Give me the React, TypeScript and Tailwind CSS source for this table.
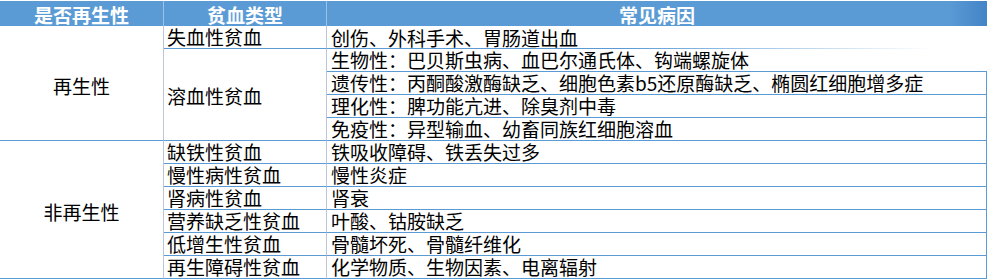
import React from "react";

const BLUE = "border-[#5b9bd5]";

const regenRows: string[] = [
  "创伤、外科手术、胃肠道出血",
  "生物性：巴贝斯虫病、血巴尔通氏体、钩端螺旋体",
  "遗传性：丙酮酸激酶缺乏、细胞色素b5还原酶缺乏、椭圆红细胞增多症",
  "理化性：脾功能亢进、除臭剂中毒",
  "免疫性：异型输血、幼畜同族红细胞溶血",
];

const nonRegen: [string, string][] = [
  ["缺铁性贫血", "铁吸收障碍、铁丢失过多"],
  ["慢性病性贫血", "慢性炎症"],
  ["肾病性贫血", "肾衰"],
  ["营养缺乏性贫血", "叶酸、钴胺缺乏"],
  ["低增生性贫血", "骨髓坏死、骨髓纤维化"],
  ["再生障碍性贫血", "化学物质、生物因素、电离辐射"],
];

function Txt({ children }: { children: React.ReactNode }) {
  return <span className="block h-[22px] leading-[22px] whitespace-nowrap">{children}</span>;
}

export default function App() {
  return (
    <div className="w-[988px] h-[279px] bg-white overflow-hidden pt-[1px] font-['Noto_Sans_CJK_SC',sans-serif] text-[19px] text-black">
      <div className="grid grid-cols-[164px_163px_660px] grid-rows-[25px_repeat(11,23px)]">
        {/* header */}
        <div className="bg-[#5b9bd5] border-r border-white/40 flex items-end justify-center text-white font-bold">
          <Txt>是否再生性</Txt>
        </div>
        <div className="bg-[#5b9bd5] border-r border-white/40 flex items-end justify-center text-white font-bold">
          <Txt>贫血类型</Txt>
        </div>
        <div className="bg-[linear-gradient(to_right,#5b9bd5_94%,#4384c6)] flex items-end justify-center text-white font-bold">
          <Txt>常见病因</Txt>
        </div>

        {/* regenerative block */}
        <div
          className={`row-span-5 border-r border-r-[#bcc6da] border-b ${BLUE} flex items-center justify-center`}
        >
          <span className="block leading-[22px] pt-[6px]">再生性</span>
        </div>
        <div className={`border-r border-r-[#bcc6da] border-b ${BLUE} flex items-end pl-[3px]`}>
          <Txt>失血性贫血</Txt>
        </div>
        <div className="relative flex items-end pl-[4px]">
          <Txt>{regenRows[0]}</Txt>
          <div className="absolute left-0 right-0 bottom-0 h-px bg-[linear-gradient(to_right,#5b9bd5_45%,rgba(91,155,213,0)_92%)]" />
        </div>
        <div
          className={`row-span-4 border-r border-r-[#bcc6da] border-b ${BLUE} flex items-center pl-[3px]`}
        >
          <span className="block leading-[22px] pt-[3px]">溶血性贫血</span>
        </div>
        {regenRows.slice(1).map((t, i) => (
          <div
            key={t}
            className={`border-b ${BLUE} ${i === 0 ? "" : "border-r"} flex items-end pl-[4px]`}
          >
            <Txt>{t}</Txt>
          </div>
        ))}

        {/* non-regenerative block */}
        <div
          className={`row-span-6 border-r border-r-[#bcc6da] border-b ${BLUE} flex items-center justify-center`}
        >
          <span className="block leading-[22px] pt-[4px]">非再生性</span>
        </div>
        {nonRegen.map(([a, b]) => (
          <React.Fragment key={a}>
            <div className={`border-r border-r-[#bcc6da] border-b ${BLUE} flex items-end pl-[3px]`}>
              <Txt>{a}</Txt>
            </div>
            <div className={`border-b border-r ${BLUE} flex items-end pl-[4px]`}>
              <Txt>{b}</Txt>
            </div>
          </React.Fragment>
        ))}
      </div>
    </div>
  );
}
